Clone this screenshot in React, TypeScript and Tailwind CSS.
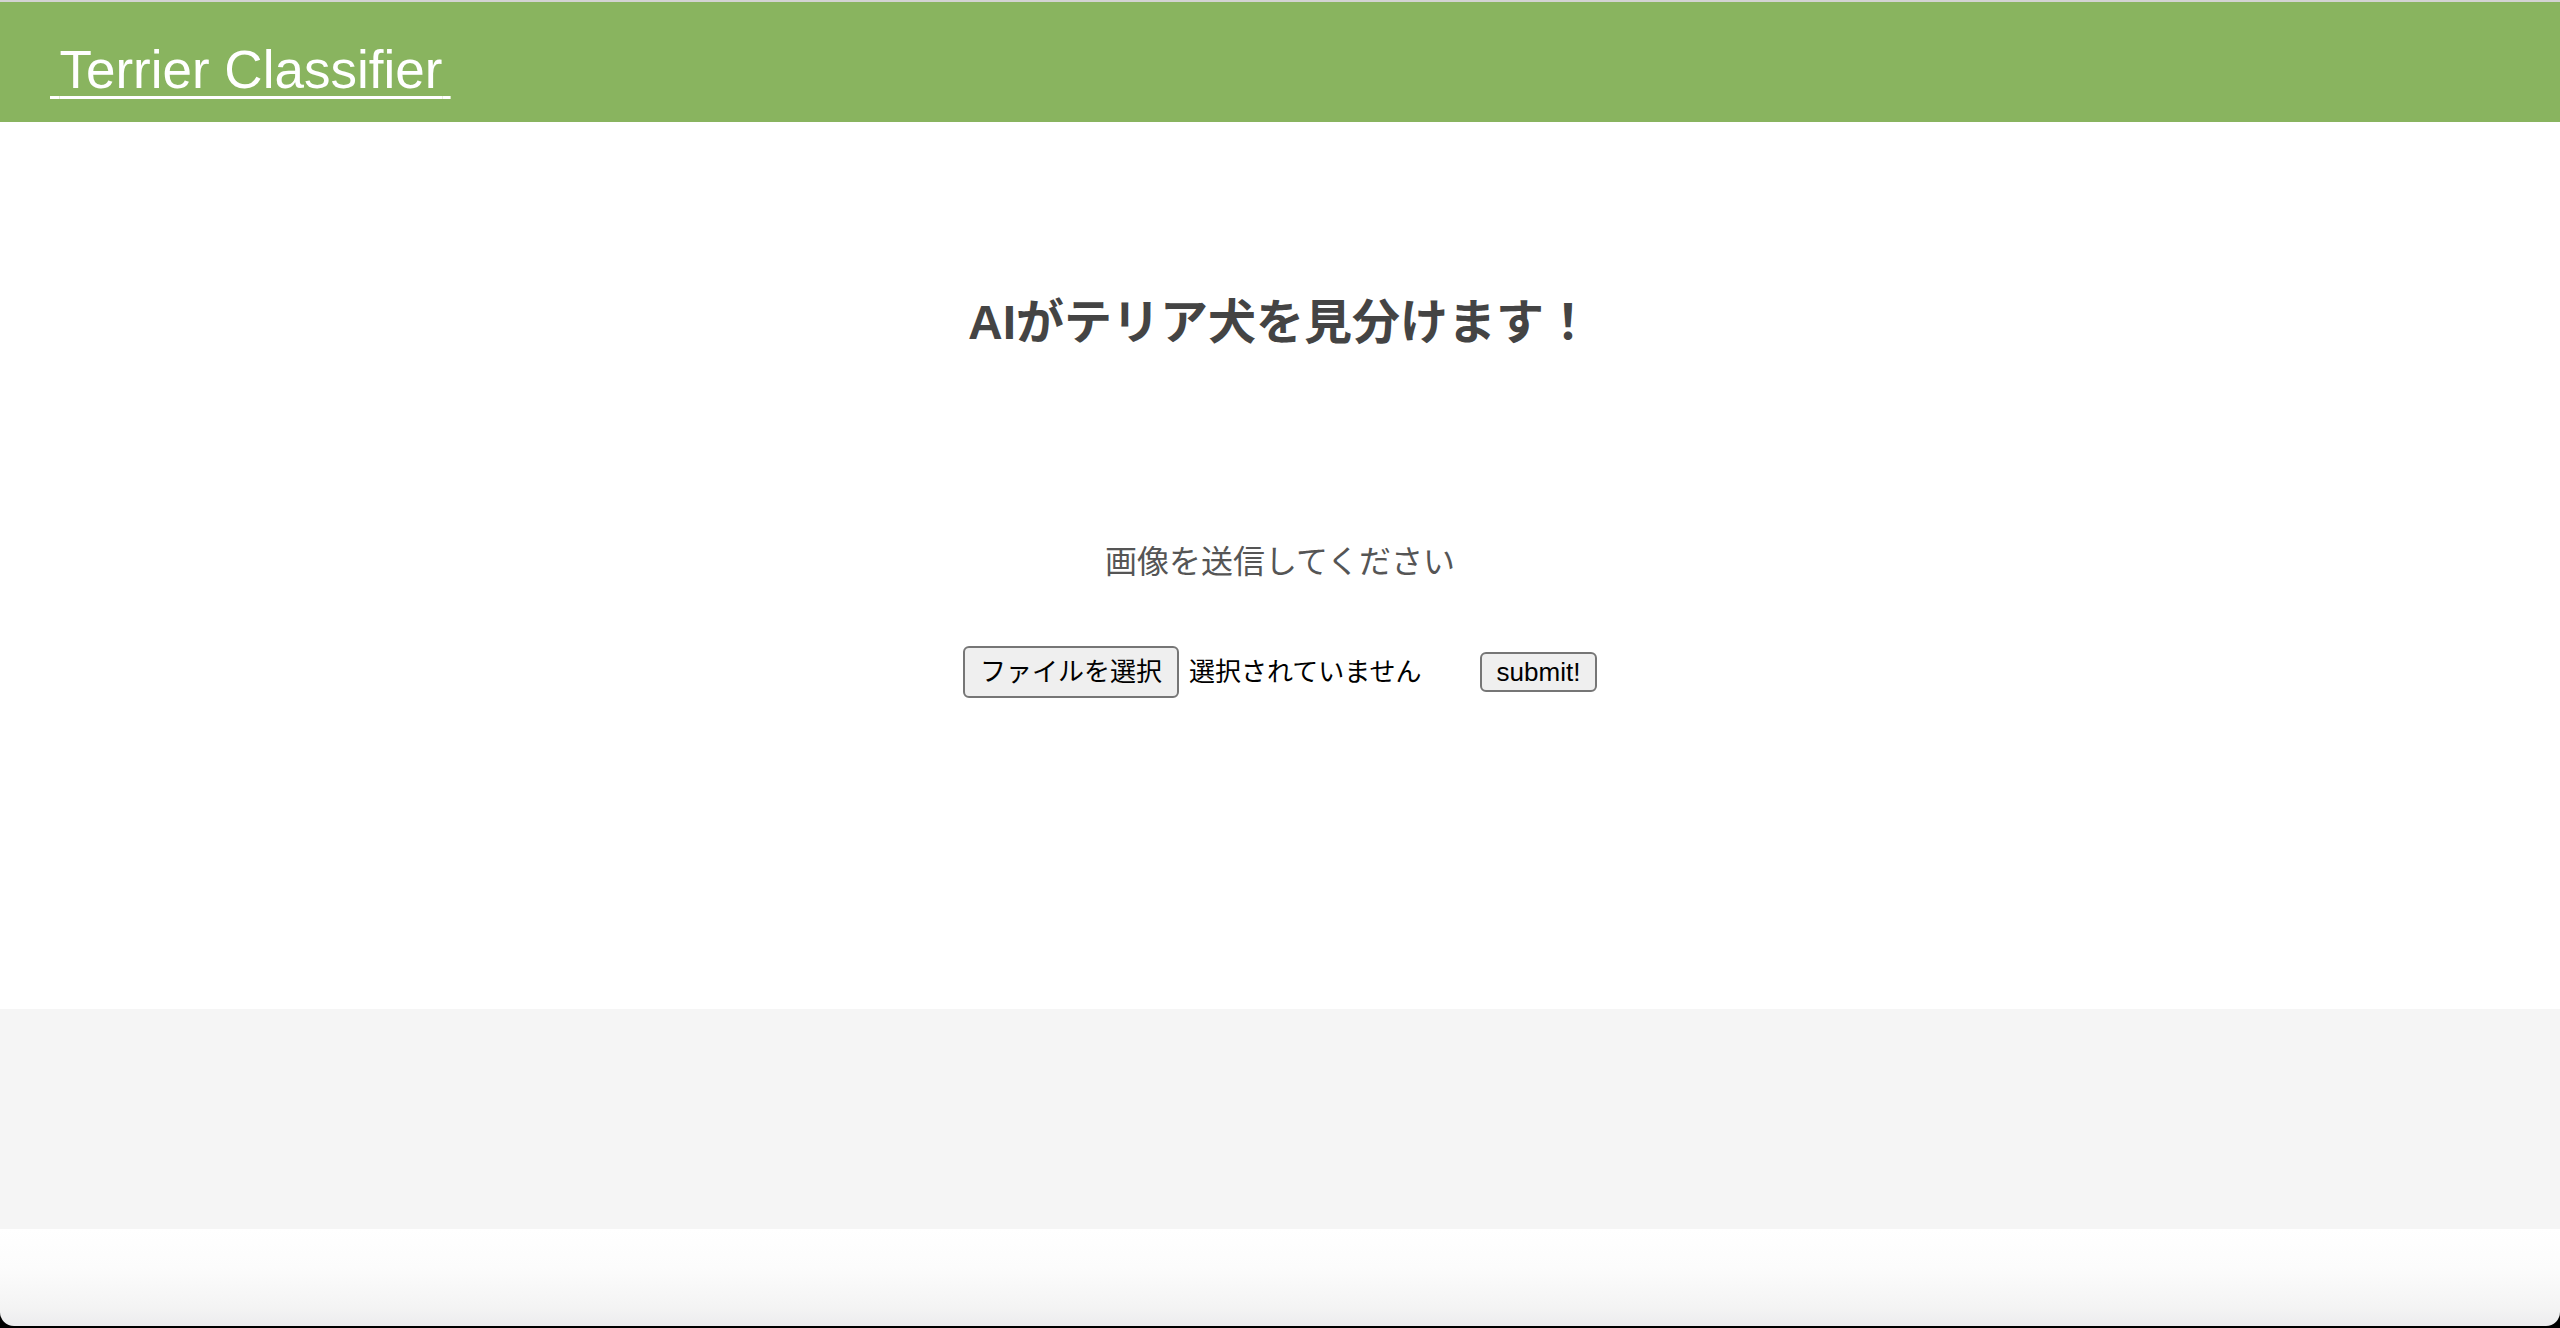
import React from "react";

const jp = "font-['Liberation_Sans','Noto_Sans_CJK_JP',sans-serif]";

export default function App() {
  return (
    <div className="flex flex-col h-screen bg-black">
      {/* header */}
      <header className="h-[122px] border-t-2 border-[#d3d3d3] bg-[#89b45f] pl-[50px] pt-[38px]">
        <a
          href="#"
          className="text-white text-[53px] leading-[1.15] font-['Liberation_Sans',sans-serif] underline decoration-[length:3px] underline-offset-8"
        >
          <span className="text-[34px]">{"\u00a0"}</span>
          Terrier Classifier
          <span className="text-[30px]">{"\u00a0"}</span>
        </a>
      </header>

      {/* main */}
      <main className={`flex-1 bg-white flex flex-col items-center pt-[165px] ${jp}`}>
        <h2 className="text-[48px] leading-[72px] font-bold text-[#444444]">
          AIがテリア犬を見分けます！
        </h2>
        <p className="mt-[179px] text-[32px] leading-[48px] text-[#555555]">
          画像を送信してください
        </p>
        <form className="mt-[60px] flex items-center text-black">
          <button
            type="button"
            className="w-[216px] h-[52px] rounded-[6px] border-2 border-[#767676] bg-[#efefef] text-[26px] leading-none"
          >
            ファイルを選択
          </button>
          <span className="ml-[10px] w-[291px] text-[26px] leading-none">選択されていません</span>
          <button
            type="button"
            className="w-[117px] h-[40px] rounded-[6px] border-2 border-[#767676] bg-[#efefef] text-[26px] leading-none font-['Liberation_Sans',sans-serif]"
          >
            submit!
          </button>
        </form>
      </main>

      {/* footer */}
      <footer className="h-[220px] bg-[#f5f5f5]" />

      {/* window bottom edge */}
      <div className="h-[97px] rounded-b-[14px] bg-[linear-gradient(to_bottom,#ffffff,#fcfcfc_40%,#f4f4f4_80%,#ececee)]" />
      <div className="h-[2px]" />
    </div>
  );
}
